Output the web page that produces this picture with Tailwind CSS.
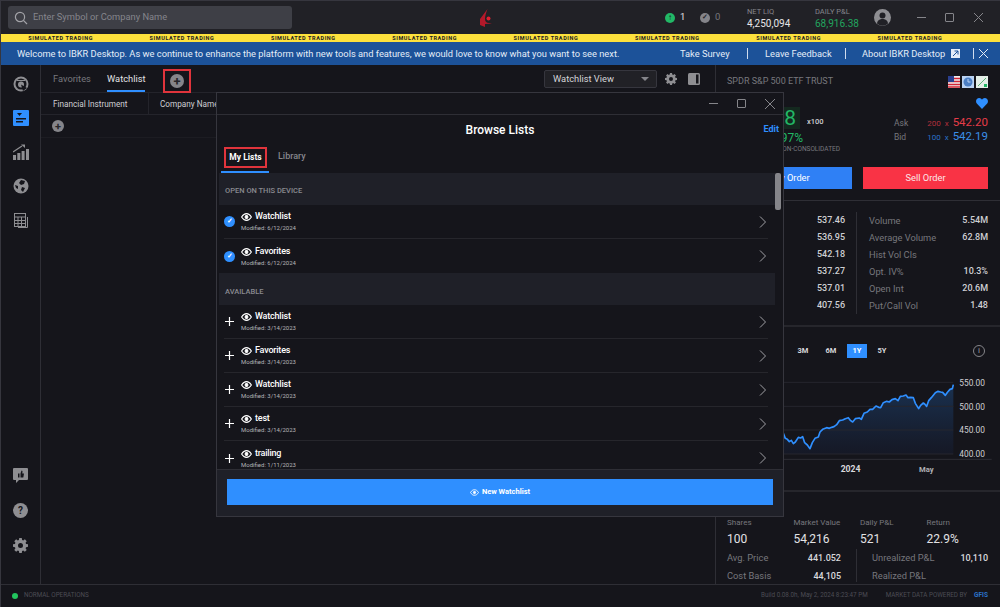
<!DOCTYPE html>
<html lang="en">
<head>
  <meta charset="UTF-8">
  <title>IBKR Desktop</title>
  <script src="https://cdn.jsdelivr.net/npm/@tailwindcss/browser@4"></script>
</head>
<body class="bg-[#15151b]">
<div class="relative w-[1000px] h-[607px] overflow-hidden flex flex-col bg-[#15151b] text-[#d8d8dc] font-['Roboto',sans-serif] text-[9.3px] border-l border-[#36363e]">

  <!-- top bar -->
  <div class="h-[34px] shrink-0 bg-[#212126] border-t border-[#36363e] flex items-center pl-[7px]">
    <div class="w-[284px] h-[23px] rounded-[3px] bg-[#3e3f46] flex items-center pl-[6px] gap-[5px]">
      <svg class="w-[14px] h-[14px]" viewBox="0 0 14 14" fill="none" stroke="#a3a3a8" stroke-width="1.2"><circle cx="6" cy="6" r="4.6"/><path d="M9.4 9.4 13 13"/></svg>
      <span class="text-[#85858c] text-[9.3px] pb-px">Enter Symbol or Company Name</span>
    </div>
    <svg class="ml-[188px] w-[12px] h-[18px]" viewBox="0 0 12 18"><path d="M0 18V10L7.500 0C6 4 5 7 5 10C5 12.500 6.500 14 9 14L12 14.500 5 15V18L0 16Z" fill="#b3192a"/><circle cx="8.500" cy="9.500" r="2" fill="#e0202f"/></svg>
    <div class="ml-[173px] flex items-center gap-[3px]">
      <span class="w-[10px] h-[10px] rounded-full bg-[#22b866] flex items-center justify-center text-[#15151b] text-[8px] leading-none font-bold">↑</span>
      <span class="w-[6px] text-[9.5px] text-[#e4e4e6] ml-[2px]">1</span>
    </div>
    <div class="ml-[14px] flex items-center gap-[3px]">
      <span class="w-[10px] h-[10px] rounded-full bg-[#85858a] flex items-center justify-center text-[#26262a] text-[7px] leading-none font-bold">✓</span>
      <span class="w-[6px] text-[9.5px] text-[#77777d] ml-[2px]">0</span>
    </div>
    <div class="ml-[26px] w-[68px] flex flex-col leading-[12px]">
      <span class="text-[7.5px] text-[#85858c]">NET LIQ</span>
      <span class="text-[10px] text-[#e6e6e8]">4,250,094</span>
    </div>
    <div class="flex flex-col leading-[12px] w-[59px]">
      <span class="text-[7.5px] text-[#85858c]">DAILY P&amp;L</span>
      <span class="text-[10px] text-[#22a45f]">68,916.38</span>
    </div>
    <svg class="w-[17px] h-[17px]" viewBox="0 0 17 17"><circle cx="8.500" cy="8.500" r="8.500" fill="#8e8e92"/><circle cx="8.500" cy="6.500" r="3" fill="#212126"/><path d="M3 14.500C3.500 11 6 10 8.500 10S13.500 11 14 14.500A8 8 0 0 1 3 14.500Z" fill="#212126"/></svg>
    <div class="ml-[26px] flex items-center gap-[19px]">
      <span class="w-[9px] h-px bg-[#85858a]"></span>
      <span class="w-[9px] h-[9px] border border-[#85858a] rounded-[1px]"></span>
      <svg class="w-[9px] h-[9px] ml-px" viewBox="0 0 9 9" stroke="#85858a" fill="none"><path d="M0 0 9 9M9 0 0 9"/></svg>
    </div>
  </div>

  <!-- simulated trading strip -->
  <div class="h-[8px] shrink-0 bg-[#fde13c] flex overflow-hidden -ml-px">
    <span class="w-[121.33px] shrink-0 text-center text-[5.5px] leading-[8px] font-bold tracking-[0.6px] text-[#222]">SIMULATED TRADING</span>
    <span class="w-[121.33px] shrink-0 text-center text-[5.5px] leading-[8px] font-bold tracking-[0.6px] text-[#222]">SIMULATED TRADING</span>
    <span class="w-[121.33px] shrink-0 text-center text-[5.5px] leading-[8px] font-bold tracking-[0.6px] text-[#222]">SIMULATED TRADING</span>
    <span class="w-[121.33px] shrink-0 text-center text-[5.5px] leading-[8px] font-bold tracking-[0.6px] text-[#222]">SIMULATED TRADING</span>
    <span class="w-[121.33px] shrink-0 text-center text-[5.5px] leading-[8px] font-bold tracking-[0.6px] text-[#222]">SIMULATED TRADING</span>
    <span class="w-[121.33px] shrink-0 text-center text-[5.5px] leading-[8px] font-bold tracking-[0.6px] text-[#222]">SIMULATED TRADING</span>
    <span class="w-[121.33px] shrink-0 text-center text-[5.5px] leading-[8px] font-bold tracking-[0.6px] text-[#222]">SIMULATED TRADING</span>
    <span class="w-[121.33px] shrink-0 text-center text-[5.5px] leading-[8px] font-bold tracking-[0.6px] text-[#222]">SIMULATED TRADING</span>
  </div>

  <!-- welcome banner -->
  <div class="h-[23px] shrink-0 bg-[#1c5299] -ml-px flex items-center pl-[17px] text-[9.3px] text-[#e4edf8]">
    <span class="w-[663px] whitespace-nowrap">Welcome to IBKR Desktop. As we continue to enhance the platform with new tools and features, we would love to know what you want to see next.</span>
    <span class="w-[67px] whitespace-nowrap">Take Survey</span>
    <span class="w-px h-[11px] bg-[#cfdcee]"></span>
    <span class="ml-[17px] w-[80px] whitespace-nowrap">Leave Feedback</span>
    <span class="w-px h-[11px] bg-[#cfdcee]"></span>
    <span class="ml-[16px] w-[89px] whitespace-nowrap">About IBKR Desktop</span>
    <svg class="w-[9px] h-[9px]" viewBox="0 0 9 9"><rect width="9" height="9" fill="#e4edf8"/><path d="M2 7 7 2M3.500 2H7V5.500" stroke="#1c5299" fill="none"/></svg>
    <span class="ml-[13px] w-px h-[11px] bg-[#cfdcee]"></span>
    <svg class="ml-[5px] w-[9px] h-[9px]" viewBox="0 0 9 9" stroke="#e4edf8" fill="none"><path d="M0 0 9 9M9 0 0 9"/></svg>
  </div>

  <div class="flex flex-1 min-h-0">
    <!-- left rail -->
    <div class="w-[40px] shrink-0 border-r border-[#2e2e35] flex flex-col items-center pt-[11px] pb-[31px]">
      <div class="flex flex-col items-center gap-[18px]">
        <svg class="w-[16px] h-[16px]" viewBox="0 0 16 16"><circle cx="8" cy="8" r="7.500" fill="#8e8e92"/><circle cx="8" cy="8" r="5.500" fill="#15151b"/><circle cx="8" cy="8.500" r="3" fill="#8e8e92"/><path d="M8 8.500 14 12 10 15Z" fill="#15151b"/><path d="M4 4.500H12" stroke="#8e8e92"/></svg>
        <svg class="w-[16px] h-[16px]" viewBox="0 0 16 16"><rect width="16" height="16" rx="1" fill="#2f8fff"/><path d="M4 3H9L6.500 6Z" fill="#15151b"/><rect x="3" y="8" width="10" height="1.500" fill="#15151b"/><rect x="3" y="11" width="7" height="1.500" fill="#15151b"/></svg>
        <svg class="w-[16px] h-[16px]" viewBox="0 0 16 16" fill="#8e8e92"><rect y="11" width="3" height="5"/><rect x="4.300" y="9" width="3" height="7"/><rect x="8.600" y="7" width="3" height="9"/><rect x="13" y="5" width="3" height="11"/><path d="M0 8 9 2" stroke="#8e8e92" stroke-width="1.200"/><path d="M8 0.500H12V4Z"/></svg>
        <svg class="w-[16px] h-[16px]" viewBox="0 0 16 16"><circle cx="8" cy="8" r="7.500" fill="#8e8e92"/><path d="M8 2 12 3 11 6 8 7 6 5ZM9 9 12 10 10 14 8 12ZM2 7 5 8 5 11 3 10Z" fill="#15151b"/></svg>
        <svg class="w-[16px] h-[16px]" viewBox="0 0 16 16" fill="none" stroke="#8e8e92"><rect x="1.500" y="1.500" width="11" height="13"/><path d="M1.500 5H12.500M1.500 8.500H12.500M1.500 11.500H12.500M5 5V14.500M8.500 5V14.500"/><path d="M14.500 5V15.500H5"/></svg>
      </div>
      <div class="mt-auto flex flex-col items-center gap-[20px]">
        <svg class="w-[15px] h-[15px]" viewBox="0 0 15 15"><path d="M1 0H14A1 1 0 0 1 15 1V11A1 1 0 0 1 14 12H6L3 15V12H1A1 1 0 0 1 0 11V1A1 1 0 0 1 1 0Z" fill="#8e8e92"/><path d="M5 5.500H6.500V9.500H5ZM7.500 5.500 8.500 2.500 9.500 3 9.300 5.500H11L10.300 9.500H7.500Z" fill="#15151b"/></svg>
        <span class="w-[15px] h-[15px] rounded-full bg-[#8e8e92] flex items-center justify-center text-[10px] font-bold leading-none text-[#15151b]">?</span>
        <svg class="w-[15px] h-[15px]" viewBox="0 0 24 24" fill="#8e8e92"><path fill-rule="evenodd" d="M10 0h4l.6 3.100 1.800.8L19 2.100 21.900 5l-1.800 2.600.8 1.800L24 10v4l-3.100.6-.8 1.800 1.800 2.600L19 21.900l-2.600-1.800-1.800.8L14 24h-4l-.6-3.100-1.800-.8L5 21.900 2.100 19l1.800-2.600-.8-1.800L0 14v-4l3.100-.6.8-1.800L2.100 5 5 2.100l2.600 1.800 1.800-.8zM12 8a4 4 0 1 0 0 8 4 4 0 0 0 0-8z"/></svg>
      </div>
    </div>

    <!-- watchlist area -->
    <div class="w-[675px] shrink-0 border-r border-[#2e2e35] flex flex-col">
      <div class="h-[28px] flex items-stretch pl-[12px] pr-[15px] border-b border-[#24242b]">
        <span class="w-[37px] text-[#77777d] pt-[7px] whitespace-nowrap">Favorites</span>
        <span class="ml-[17px] w-[38px] pt-[7px] text-[#e2e2e5] border-b-2 border-[#2f8fff] whitespace-nowrap">Watchlist</span>
        <div class="ml-[18px] mt-[4px] w-[28px] h-[24px] border-2 border-[#e0343c] flex items-center justify-center">
          <span class="w-[14px] h-[14px] rounded-full bg-[#85858a] flex items-center justify-center text-[13px] leading-none text-[#26262a] font-bold">+</span>
        </div>
        <div class="ml-auto mt-[5px] w-[113px] h-[18px] bg-[#212126] border border-[#36363e] rounded-[2px] flex items-center justify-between pl-[8px] pr-[7px] text-[#d4d4d8]">
          Watchlist View
          <span class="w-0 h-0 border-x-[4px] border-x-transparent border-t-[4px] border-t-[#85858a]"></span>
        </div>
        <svg class="ml-[8px] mt-[8px] w-[12px] h-[12px]" viewBox="0 0 24 24" fill="#8e8e92"><path fill-rule="evenodd" d="M10 0h4l.6 3.100 1.800.8L19 2.100 21.900 5l-1.800 2.600.8 1.800L24 10v4l-3.100.6-.8 1.800 1.800 2.600L19 21.900l-2.600-1.800-1.800.8L14 24h-4l-.6-3.100-1.800-.8L5 21.900 2.100 19l1.800-2.600-.8-1.800L0 14v-4l3.100-.6.8-1.800L2.100 5 5 2.100l2.600 1.800 1.800-.8zM12 8a4 4 0 1 0 0 8 4 4 0 0 0 0-8z"/></svg>
        <svg class="ml-[11px] mt-[8px] w-[12px] h-[12px]" viewBox="0 0 12 12"><rect width="12" height="12" rx="1.500" fill="#8e8e92"/><rect x="8" y="1.500" width="2.500" height="9" fill="#15151b"/></svg>
      </div>
      <div class="h-[22px] flex items-center border-b border-[#24242b] text-[#cfcfd3] text-[8.2px]">
        <span class="pl-[12px] pt-px w-[108px] h-full flex items-center border-r border-[#24242b]">Financial Instrument</span>
        <span class="pl-[11px] pt-px">Company Name</span>
      </div>
      <div class="h-[23px] flex items-center pl-[11px] border-b border-[#1c1c22]">
        <span class="w-[12px] h-[12px] rounded-full bg-[#85858a] flex items-center justify-center text-[11px] leading-none text-[#26262a] font-bold">+</span>
      </div>
    </div>

    <!-- instrument panel -->
    <div class="flex-1 min-w-0 flex flex-col">
      <div class="h-[136px] shrink-0 border-b border-[#2e2e35] pl-[11px] pr-[12px]">
        <div class="flex items-center justify-between pt-[10px]">
          <span class="text-[#77777d] text-[9px]">SPDR S&amp;P 500 ETF TRUST</span>
          <div class="flex gap-[2px]">
            <svg class="w-[12px] h-[12px]" viewBox="0 0 12 12"><rect width="12" height="12" fill="#eee"/><path d="M0 2.500H12M0 5.500H12M0 8.500H12M0 11H12" stroke="#d32434" stroke-width="1.300"/><rect width="6" height="6" fill="#2a3f8f"/></svg>
            <svg class="w-[12px] h-[12px]" viewBox="0 0 12 12"><rect width="12" height="12" fill="#b9d3f4"/><circle cx="6" cy="6" r="4.500" fill="#4c7fc4"/><path d="M6 3V6H8.500" stroke="#b9d3f4" fill="none"/></svg>
            <svg class="w-[12px] h-[12px]" viewBox="0 0 12 12"><rect width="12" height="12" fill="#e4efe8"/><path d="M2 10 10 2" stroke="#5cb277"/><rect x="8" y="8" width="3" height="3" fill="#22b866"/></svg>
          </div>
        </div>
        <div class="flex justify-end mt-[9px]">
          <svg class="w-[12px] h-[11px]" viewBox="0 0 12 11"><path d="M6 11 .8 5.500C-1 3 .6 0 3.200 0 4.500 0 5.500.8 6 1.700 6.500.8 7.500 0 8.800 0 11.400 0 13 3 11.200 5.500Z" fill="#2f8fff"/></svg>
        </div>
        <div class="flex -mt-[2px] h-[44px]">
          <div class="w-[114px] shrink-0 flex flex-col whitespace-nowrap">
            <div class="flex items-center h-[22px]">
              <span class="w-[73px] bg-[#14291f] text-[#22b866] text-[21px] leading-[22px] pr-[4px] text-right">542.18</span>
              <span class="ml-[7px] mt-[9px] text-[7.5px] font-medium text-[#cfcfd3]">x100</span>
            </div>
            <span class="w-[76px] mt-[2px] text-right text-[#22b866] text-[12px] leading-[14px]">+1.97%</span>
            <span class="w-[113px] text-right text-[#77777d] text-[6.5px] leading-[9px]">NON-CONSOLIDATED</span>
          </div>
          <div class="ml-auto w-[94px] mt-[9px] text-[8.5px] flex flex-col leading-[13px]">
            <div class="flex items-baseline"><span class="text-[#77777d]">Ask</span><span class="text-[#b3303c] text-[8px] ml-auto mr-[4px]">200&nbsp;&nbsp;x</span><span class="text-[#e63c48] text-[11.5px]">542.20</span></div>
            <div class="flex items-baseline"><span class="text-[#77777d]">Bid</span><span class="text-[#2b72c9] text-[8px] ml-auto mr-[4px]">100&nbsp;&nbsp;x</span><span class="text-[#3b8fe8] text-[11.5px]">542.19</span></div>
          </div>
        </div>
        <div class="flex gap-[11px] mt-[16px]">
          <span class="flex-1 h-[22px] bg-[#2f80f5] text-white flex items-center justify-center">Buy Order</span>
          <span class="flex-1 h-[22px] bg-[#f93345] text-[#fbe6e8] flex items-center justify-center">Sell Order</span>
        </div>
      </div>

      <!-- stats -->
      <div class="h-[126px] shrink-0 border-b-2 border-[#26262c] pl-[11px] pr-[12px] pt-[11px] flex">
        <div class="w-[130px] shrink-0 pr-[11px] border-r border-[#2e2e35] h-[102px] flex flex-col font-medium text-[9px] text-[#cfcfd3] text-right leading-[17px]">
          <span>537.46</span><span>536.95</span><span>542.18</span><span>537.27</span><span>537.01</span><span>407.56</span>
        </div>
        <div class="flex-1 pl-[12px] flex flex-col leading-[17px]">
          <div class="flex justify-between"><span class="text-[#77777d]">Volume</span><span class="font-medium text-[9px] text-[#cfcfd3]">5.54M</span></div>
          <div class="flex justify-between"><span class="text-[#77777d]">Average Volume</span><span class="font-medium text-[9px] text-[#cfcfd3]">62.8M</span></div>
          <div class="flex justify-between"><span class="text-[#77777d]">Hist Vol Cls</span></div>
          <div class="flex justify-between"><span class="text-[#77777d]">Opt. IV%</span><span class="font-medium text-[9px] text-[#cfcfd3]">10.3%</span></div>
          <div class="flex justify-between"><span class="text-[#77777d]">Open Int</span><span class="font-medium text-[9px] text-[#cfcfd3]">20.6M</span></div>
          <div class="flex justify-between"><span class="text-[#77777d]">Put/Call Vol</span><span class="font-medium text-[9px] text-[#cfcfd3]">1.48</span></div>
        </div>
      </div>

      <!-- chart -->
      <div class="h-[165px] shrink-0 border-b-2 border-[#26262c] pl-[54px] flex flex-col">
        <div class="h-[46px] shrink-0 flex items-center pt-[2px] pr-[15px] text-[7.5px] font-bold text-[#d8d8dc]">
          <span class="w-[16px] text-center ml-[25px]">3M</span>
          <span class="w-[16px] text-center ml-[12px]">6M</span>
          <span class="w-[20px] h-[14px] ml-[8px] bg-[#2f8fff] text-white flex items-center justify-center">1Y</span>
          <span class="w-[16px] text-center ml-[7px]">5Y</span>
          <span class="ml-auto w-[12px] h-[12px] rounded-full border border-[#85858a] flex items-center justify-center text-[8px] font-normal text-[#a0a0a5]">i</span>
        </div>
        <svg class="w-[230px] h-[117px] shrink-0" viewBox="0 129 690 351">
          <defs><linearGradient id="area" x1="0" y1="0" x2="0" y2="1"><stop offset="0" stop-color="#1d4474" stop-opacity="0.6"/><stop offset="1" stop-color="#161c30" stop-opacity="0.5"/></linearGradient></defs>
          <path d="M40 310 50 330 60 332 70 340 85 322 98 322 105 340 120 355 130 330 145 320 155 300 170 293 185 293 195 288 210 270 235 263 247 275 260 265 270 265 285 248 300 238 318 228 330 232 345 215 375 207 385 210 392 198 408 196 415 203 430 203 445 235 460 220 470 228 480 205 497 187 510 185 520 190 527 195 540 178 548 175 550 165V372H40Z" fill="url(#area)"/>
          <path d="M40 157H550M40 229H550M40 300H550M40 372H550" stroke="#26262e" stroke-width="3"/>
          <path d="M40 388H665" stroke="#2e2e35" stroke-width="3"/>
          <path d="M40 310 46 325 52 328 58 335 64 331 70 341 76 336 85 322 92 324 98 320 104 338 112 345 120 356 127 338 135 325 145 321 150 306 158 298 170 293 178 295 185 292 192 290 200 284 208 272 218 270 226 266 235 263 242 272 248 276 256 266 268 264 274 268 282 250 292 246 300 238 308 238 318 228 326 232 332 233 340 218 350 214 358 216 366 209 376 206 384 212 391 199 400 198 408 195 414 203 422 202 430 203 436 220 446 236 452 226 460 219 464 222 470 229 476 212 484 203 496 188 504 184 512 186 518 187 526 196 533 186 540 178 547 176 550 164" fill="none" stroke="#2f8fff" stroke-width="5" stroke-linejoin="round"/>
          <text x="568" y="167" fill="#cfcfd3" font-size="25">550.00</text>
          <text x="568" y="239" fill="#cfcfd3" font-size="25">500.00</text>
          <text x="568" y="310" fill="#cfcfd3" font-size="25">450.00</text>
          <text x="568" y="382" fill="#cfcfd3" font-size="25">400.00</text>
          <text x="212" y="427" fill="#d8d8dc" font-size="26" font-weight="700">2024</text>
          <text x="447" y="427" fill="#b0b0b5" font-size="23" font-weight="700">May</text>
        </svg>
      </div>

      <!-- position -->
      <div class="flex-1 min-h-0 pl-[11px] pr-[12px] pt-[25px] flex flex-col">
        <div class="flex text-[8px] leading-[12px] text-[#77777d]">
          <span class="w-[66.5px]">Shares</span><span class="w-[66.5px]">Market Value</span><span class="w-[66.5px]">Daily P&amp;L</span><span>Return</span>
        </div>
        <div class="flex text-[12px] leading-[18px] mt-px text-[#e2e2e5]">
          <span class="w-[66.5px]">100</span><span class="w-[66.5px]">54,216</span><span class="w-[66.5px]">521</span><span>22.9%</span>
        </div>
        <div class="flex h-[33px] mt-px leading-[18px]">
          <div class="w-[130px] shrink-0 pr-[15px] border-r border-[#2e2e35]">
            <div class="flex justify-between"><span class="text-[#77777d]">Avg. Price</span><span class="font-medium text-[9px] text-[#d8d8dc]">441.052</span></div>
            <div class="flex justify-between"><span class="text-[#77777d]">Cost Basis</span><span class="font-medium text-[9px] text-[#d8d8dc]">44,105</span></div>
          </div>
          <div class="flex-1 pl-[15px]">
            <div class="flex justify-between"><span class="text-[#77777d]">Unrealized P&amp;L</span><span class="font-medium text-[9px] text-[#d8d8dc]">10,110</span></div>
            <div class="flex justify-between"><span class="text-[#77777d]">Realized P&amp;L</span></div>
          </div>
        </div>
      </div>
    </div>
  </div>

  <!-- status bar -->
  <div class="h-[23px] shrink-0 border-t border-[#2e2e35] flex items-center text-[6.3px] text-[#4c4c54]">
    <span class="ml-[11px] w-[6px] h-[6px] rounded-full bg-[#22c55e]"></span>
    <span class="ml-[6px]">NORMAL OPERATIONS</span>
    <span class="ml-auto">Build 0.08.0h, May 2, 2024 8:23:47 PM</span>
    <span class="ml-[18px]">MARKET DATA POWERED BY</span>
    <span class="ml-[7px] mr-[12px] text-[6.5px] font-bold text-[#2b72c9]">GFIS</span>
  </div>

  <!-- browse lists dialog -->
  <div class="absolute left-[215px] top-[92px] w-[568px] h-[425px] bg-[#15151b] border border-[#36363e] flex flex-col">
    <div class="h-[22px] shrink-0 border-b border-[#2e2e35] flex items-center justify-end pr-[8px] gap-[19px]">
      <span class="w-[9px] h-px bg-[#85858a]"></span>
      <span class="w-[9px] h-[9px] border border-[#85858a] rounded-[1px]"></span>
      <svg class="w-[10px] h-[10px]" viewBox="0 0 10 10" stroke="#85858a" fill="none"><path d="M0 0 10 10M10 0 0 10"/></svg>
    </div>
    <div class="h-[58px] shrink-0 flex flex-col">
      <div class="h-[30px] grid grid-cols-3 items-center">
        <span></span>
        <span class="text-center text-[12px] font-medium text-white whitespace-nowrap">Browse Lists</span>
        <span class="text-right pr-[4px] text-[9px] font-bold text-[#2f8fff]">Edit</span>
      </div>
      <div class="flex pl-[4px]">
        <div class="w-[48px] h-[28px] border-b-2 border-[#2f8fff] pt-[2px] pl-[3px]">
          <div class="w-[43px] h-[21px] border-2 border-[#e0343c] flex items-center justify-center text-[8.5px] font-bold text-white">My Lists</div>
        </div>
        <span class="ml-[9px] pt-[5px] text-[9px] font-medium text-[#85858c]">Library</span>
      </div>
    </div>

    <div class="relative flex-1 min-h-0 overflow-hidden pl-[2px]">
      <span class="absolute left-[558px] top-0 w-[6px] h-[37px] rounded-[2px] bg-[#85858a]"></span>

      <div class="w-[556px] h-[32px] bg-[#1f2028] flex items-center pl-[6px] pt-[4px] text-[7.5px] font-medium text-[#8a8a90]">OPEN ON THIS DEVICE</div>

      <div class="ml-[5px] w-[544px] h-[34px] border-b border-[#26262c] flex items-center pr-[2px]">
        <span class="w-[11px] h-[11px] rounded-full bg-[#2f8fff] flex items-center justify-center text-white text-[7px] leading-none font-bold">✓</span>
        <div class="ml-[6px] flex flex-col">
          <div class="flex items-center gap-[3px] h-[12px] text-[9px] tracking-[-0.2px] font-medium text-white">
            <svg class="w-[11px] h-[8px]" viewBox="0 0 11 8" fill="none" stroke="#fff" stroke-width="1.100"><path d="M.6 4C2 1.700 3.600.6 5.500.6S9 1.700 10.400 4C9 6.300 7.400 7.400 5.500 7.400S2 6.300.6 4Z"/><circle cx="5.500" cy="4" r="1.400" fill="#fff"/></svg>
            Watchlist
          </div>
          <span class="h-[9px] text-[6px] leading-[9px] text-[#b4b4b8]">Modified: 6/12/2024</span>
        </div>
        <svg class="ml-auto w-[7px] h-[12px]" viewBox="0 0 7 12" fill="none" stroke="#a0a0a5"><path d="M1 .5 6.500 6 1 11.500"/></svg>
      </div>

      <div class="ml-[5px] w-[544px] h-[34px] flex items-center pr-[2px]">
        <span class="w-[11px] h-[11px] rounded-full bg-[#2f8fff] flex items-center justify-center text-white text-[7px] leading-none font-bold">✓</span>
        <div class="ml-[6px] flex flex-col">
          <div class="flex items-center gap-[3px] h-[12px] text-[9px] tracking-[-0.2px] font-medium text-white">
            <svg class="w-[11px] h-[8px]" viewBox="0 0 11 8" fill="none" stroke="#fff" stroke-width="1.100"><path d="M.6 4C2 1.700 3.600.6 5.500.6S9 1.700 10.400 4C9 6.300 7.400 7.400 5.500 7.400S2 6.300.6 4Z"/><circle cx="5.500" cy="4" r="1.400" fill="#fff"/></svg>
            Favorites
          </div>
          <span class="h-[9px] text-[6px] leading-[9px] text-[#b4b4b8]">Modified: 6/12/2024</span>
        </div>
        <svg class="ml-auto w-[7px] h-[12px]" viewBox="0 0 7 12" fill="none" stroke="#a0a0a5"><path d="M1 .5 6.500 6 1 11.500"/></svg>
      </div>

      <div class="w-[556px] h-[32px] bg-[#1f2028] flex items-center pl-[6px] pt-[5px] text-[7.5px] font-medium text-[#8a8a90]">AVAILABLE</div>

      <div class="ml-[5px] w-[544px] h-[34px] border-b border-[#26262c] flex items-center pr-[2px]">
        <span class="w-[11px] flex justify-center"><svg class="w-[9px] h-[9px]" viewBox="0 0 9 9" stroke="#fff" stroke-width="1.200"><path d="M4.500 0V9M0 4.500H9"/></svg></span>
        <div class="ml-[6px] flex flex-col">
          <div class="flex items-center gap-[3px] h-[12px] text-[9px] tracking-[-0.2px] font-medium text-white">
            <svg class="w-[11px] h-[8px]" viewBox="0 0 11 8" fill="none" stroke="#fff" stroke-width="1.100"><path d="M.6 4C2 1.700 3.600.6 5.500.6S9 1.700 10.400 4C9 6.300 7.400 7.400 5.500 7.400S2 6.300.6 4Z"/><circle cx="5.500" cy="4" r="1.400" fill="#fff"/></svg>
            Watchlist
          </div>
          <span class="h-[9px] text-[6px] leading-[9px] text-[#b4b4b8]">Modified: 3/14/2023</span>
        </div>
        <svg class="ml-auto w-[7px] h-[12px]" viewBox="0 0 7 12" fill="none" stroke="#a0a0a5"><path d="M1 .5 6.500 6 1 11.500"/></svg>
      </div>

      <div class="ml-[5px] w-[544px] h-[34px] border-b border-[#26262c] flex items-center pr-[2px]">
        <span class="w-[11px] flex justify-center"><svg class="w-[9px] h-[9px]" viewBox="0 0 9 9" stroke="#fff" stroke-width="1.200"><path d="M4.500 0V9M0 4.500H9"/></svg></span>
        <div class="ml-[6px] flex flex-col">
          <div class="flex items-center gap-[3px] h-[12px] text-[9px] tracking-[-0.2px] font-medium text-white">
            <svg class="w-[11px] h-[8px]" viewBox="0 0 11 8" fill="none" stroke="#fff" stroke-width="1.100"><path d="M.6 4C2 1.700 3.600.6 5.500.6S9 1.700 10.400 4C9 6.300 7.400 7.400 5.500 7.400S2 6.300.6 4Z"/><circle cx="5.500" cy="4" r="1.400" fill="#fff"/></svg>
            Favorites
          </div>
          <span class="h-[9px] text-[6px] leading-[9px] text-[#b4b4b8]">Modified: 3/14/2023</span>
        </div>
        <svg class="ml-auto w-[7px] h-[12px]" viewBox="0 0 7 12" fill="none" stroke="#a0a0a5"><path d="M1 .5 6.500 6 1 11.500"/></svg>
      </div>

      <div class="ml-[5px] w-[544px] h-[34px] border-b border-[#26262c] flex items-center pr-[2px]">
        <span class="w-[11px] flex justify-center"><svg class="w-[9px] h-[9px]" viewBox="0 0 9 9" stroke="#fff" stroke-width="1.200"><path d="M4.500 0V9M0 4.500H9"/></svg></span>
        <div class="ml-[6px] flex flex-col">
          <div class="flex items-center gap-[3px] h-[12px] text-[9px] tracking-[-0.2px] font-medium text-white">
            <svg class="w-[11px] h-[8px]" viewBox="0 0 11 8" fill="none" stroke="#fff" stroke-width="1.100"><path d="M.6 4C2 1.700 3.600.6 5.500.6S9 1.700 10.400 4C9 6.300 7.400 7.400 5.500 7.400S2 6.300.6 4Z"/><circle cx="5.500" cy="4" r="1.400" fill="#fff"/></svg>
            Watchlist
          </div>
          <span class="h-[9px] text-[6px] leading-[9px] text-[#b4b4b8]">Modified: 3/14/2023</span>
        </div>
        <svg class="ml-auto w-[7px] h-[12px]" viewBox="0 0 7 12" fill="none" stroke="#a0a0a5"><path d="M1 .5 6.500 6 1 11.500"/></svg>
      </div>

      <div class="ml-[5px] w-[544px] h-[34px] border-b border-[#26262c] flex items-center pr-[2px]">
        <span class="w-[11px] flex justify-center"><svg class="w-[9px] h-[9px]" viewBox="0 0 9 9" stroke="#fff" stroke-width="1.200"><path d="M4.500 0V9M0 4.500H9"/></svg></span>
        <div class="ml-[6px] flex flex-col">
          <div class="flex items-center gap-[3px] h-[12px] text-[9px] tracking-[-0.2px] font-medium text-white">
            <svg class="w-[11px] h-[8px]" viewBox="0 0 11 8" fill="none" stroke="#fff" stroke-width="1.100"><path d="M.6 4C2 1.700 3.600.6 5.500.6S9 1.700 10.400 4C9 6.300 7.400 7.400 5.500 7.400S2 6.300.6 4Z"/><circle cx="5.500" cy="4" r="1.400" fill="#fff"/></svg>
            test
          </div>
          <span class="h-[9px] text-[6px] leading-[9px] text-[#b4b4b8]">Modified: 3/14/2023</span>
        </div>
        <svg class="ml-auto w-[7px] h-[12px]" viewBox="0 0 7 12" fill="none" stroke="#a0a0a5"><path d="M1 .5 6.500 6 1 11.500"/></svg>
      </div>

      <div class="ml-[5px] w-[544px] h-[34px] flex items-center pr-[2px]">
        <span class="w-[11px] flex justify-center"><svg class="w-[9px] h-[9px]" viewBox="0 0 9 9" stroke="#fff" stroke-width="1.200"><path d="M4.500 0V9M0 4.500H9"/></svg></span>
        <div class="ml-[6px] flex flex-col">
          <div class="flex items-center gap-[3px] h-[12px] text-[9px] tracking-[-0.2px] font-medium text-white">
            <svg class="w-[11px] h-[8px]" viewBox="0 0 11 8" fill="none" stroke="#fff" stroke-width="1.100"><path d="M.6 4C2 1.700 3.600.6 5.500.6S9 1.700 10.400 4C9 6.300 7.400 7.400 5.500 7.400S2 6.300.6 4Z"/><circle cx="5.500" cy="4" r="1.400" fill="#fff"/></svg>
            trailing
          </div>
          <span class="h-[9px] text-[6px] leading-[9px] text-[#b4b4b8]">Modified: 1/11/2023</span>
        </div>
        <svg class="ml-auto w-[7px] h-[12px]" viewBox="0 0 7 12" fill="none" stroke="#a0a0a5"><path d="M1 .5 6.500 6 1 11.500"/></svg>
      </div>
    </div>

    <div class="h-[47px] shrink-0 bg-[#1f2028] border-t border-[#2e2e35] px-[10px] pt-[9px]">
      <div class="h-[26px] bg-[#2f8fff] flex items-center justify-center gap-[3px] text-[7.5px] font-bold text-white">
        <svg class="w-[9px] h-[7px]" viewBox="0 0 11 8" fill="none" stroke="#fff" stroke-width="1.100"><path d="M.6 4C2 1.700 3.600.6 5.500.6S9 1.700 10.400 4C9 6.300 7.400 7.400 5.500 7.400S2 6.300.6 4Z"/><circle cx="5.500" cy="4" r="1.400" fill="#fff"/></svg>
        New Watchlist
      </div>
    </div>
  </div>
</div>
</body>
</html>
